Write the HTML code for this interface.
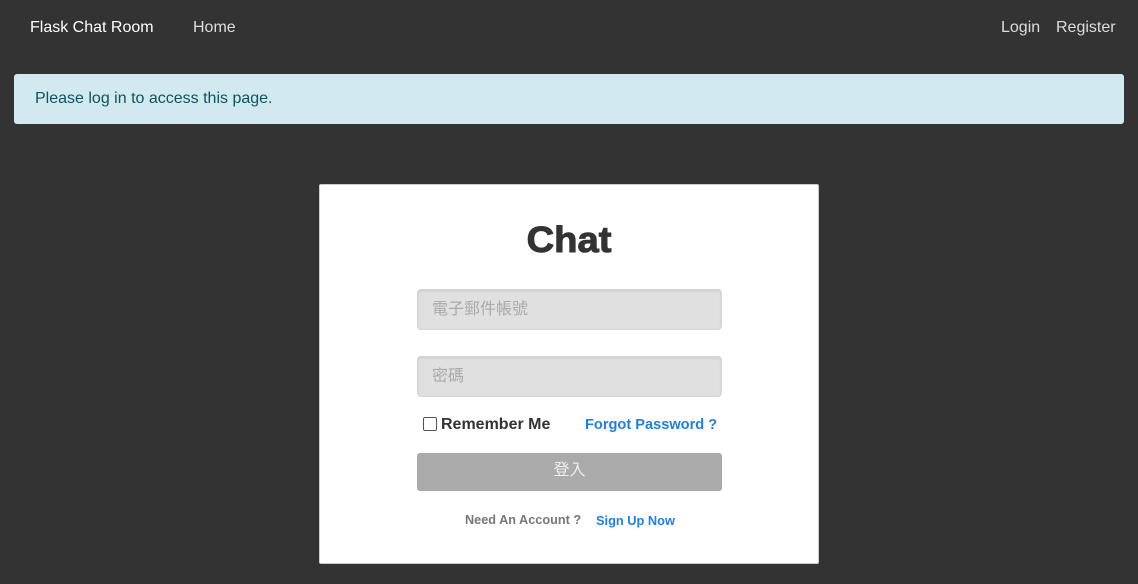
<!DOCTYPE html>
<html><head><meta charset="utf-8"><style>
body{margin:0;width:1138px;height:584px;background:#333;font-family:"Liberation Sans","Noto Sans CJK TC",sans-serif;position:relative;overflow:hidden}
.a{position:absolute;white-space:nowrap}
.nav{font-size:16px;color:#ddd;top:19px}
.alert{position:absolute;left:14px;top:74px;width:1110px;height:50px;background:#d1e9ef;border-radius:3px}
.card{position:absolute;left:319px;top:184px;width:498px;height:378px;background:#fff;border:1px solid #ccc;border-radius:2px}
.inp{position:absolute;left:97px;height:41px;background:#e0e0e0;border:1px solid #d6d6d6;border-radius:4px;box-shadow:inset 0 1px 2px rgba(0,0,0,.1);color:#aaa;font-size:16px;line-height:39px;padding-left:14px;box-sizing:border-box;width:305px}
</style></head><body>
<div class="a nav" style="left:30px;color:#fff">Flask Chat Room</div>
<div class="a nav" style="left:193px">Home</div>
<div class="a nav" style="left:1001px">Login</div>
<div class="a nav" style="left:1056px">Register</div>
<div class="alert"><div class="a" style="left:21px;top:16px;font-size:16px;color:#0c5460">Please log in to access this page.</div></div>
<div class="card">
<div class="a" style="left:0;width:498px;text-align:center;top:34px;font-size:36px;font-weight:bold;color:#333;transform:scaleX(1.06);-webkit-text-stroke:1px #333">Chat</div>
<div class="inp" style="top:104px">電子郵件帳號</div>
<div class="inp" style="top:171px">密碼</div>
<div class="a" style="left:103px;top:232px;width:12px;height:12px;border:1px solid #555;border-radius:2px"></div>
<div class="a" style="left:121px;top:231px;font-size:16px;font-weight:bold;color:#333">Remember Me</div>
<div class="a" style="left:265px;top:232px;font-size:14.6px;font-weight:bold;color:#1e7ef0">Forgot Password ?</div>
<div class="a" style="left:97px;top:268px;width:305px;height:38px;background:#aaa;border-radius:3px;color:#eee;font-size:16px;text-align:center;line-height:36px">登入</div>
<div class="a" style="left:145px;top:328px;font-size:12.7px;font-weight:bold;color:#777">Need An Account ?</div>
<div class="a" style="left:276px;top:328px;font-size:12.8px;font-weight:bold;color:#1e7ef0">Sign Up Now</div>
</div>
</body></html>
